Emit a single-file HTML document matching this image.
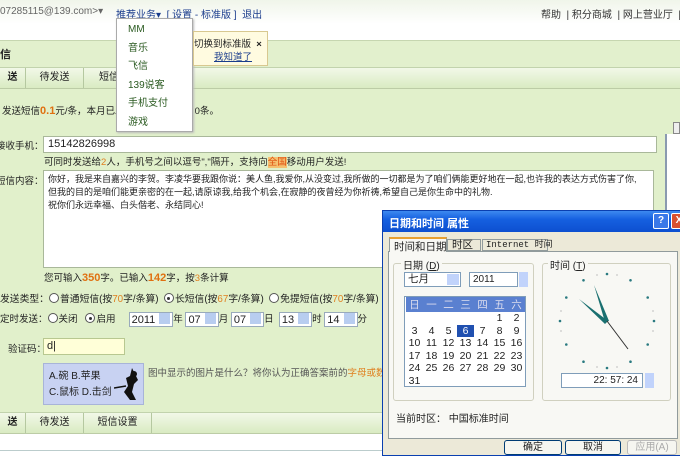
<!DOCTYPE html>
<html><head><meta charset="utf-8"><style>
*{margin:0;padding:0;box-sizing:border-box}
body{width:680px;height:456px;overflow:hidden;position:relative;font-family:"Liberation Sans","Noto Sans CJK SC",sans-serif;font-size:9.5px;color:#222;background:#fff}
.a{position:absolute;white-space:nowrap}
.o{color:#e07010;font-weight:bold;font-size:11px}
.og{color:#e08020}
.inp{position:absolute;background:#fff;border:1px solid #a9b89a}
.rad{display:inline-block;width:10px;height:10px;border:1px solid #555;border-radius:50%;vertical-align:-1px;margin-right:1px;background:#fff;position:relative}
.rad.on:after{content:"";position:absolute;left:2.5px;top:2.5px;width:3px;height:3px;background:#333;border-radius:50%}
.sel{display:inline-block;border:1px solid #9ab;background:#fff;padding:0 2px;height:15px;line-height:13px;vertical-align:middle;font-size:11px}
.sel b{display:inline-block;width:11px;height:11px;background:#b8cdf0;margin-left:4px;vertical-align:-1px}
.tabrow{position:absolute;left:0;width:665px;height:22px;background:linear-gradient(#f2f8e8,#d9ebc2);border-top:1px solid #c2d3ad;border-bottom:1px solid #bccca6;font-size:10px}
.tab{position:absolute;top:0;height:20px;line-height:20px;text-align:center;border-right:1px solid #b5c8a0}
.dlg{position:absolute;left:382px;top:210px;width:298px;height:246px;background:#ece9d8;border:1px solid #0a3fb0;border-right:none;font-size:10px}
.grp{position:absolute;border:1px solid #d0d0bf;border-radius:3px}
.btn{position:absolute;top:229px;height:15px;border:1px solid #003c74;border-radius:3px;background:#f6f6f0;text-align:center;line-height:13px}
.cal td{width:17px;height:12.5px;text-align:center;font-family:"Liberation Sans","Noto Sans CJK SC",sans-serif;font-size:10.5px}
</style></head><body>
<div class="a" style="left:0;top:0;width:680px;height:40px;background:linear-gradient(#f0f5ea,#fff 60%)"></div>
<div class="a" style="left:0;top:6px;color:#666;font-size:10px">07285115@139.com&gt;▾</div>
<div class="a" style="left:116px;top:6px;color:#1a3c8c;font-size:10px">推荐业务▾ &nbsp;[ 设置 - 标准版 ] &nbsp;退出</div>
<div class="a" style="left:541px;top:6px;color:#333;font-size:10px">帮助 &nbsp;| 积分商城 &nbsp;| 网上营业厅 &nbsp;| 中</div>
<div class="a" style="left:0;top:40px;width:680px;height:28px;background:#e2f0cd;border-top:1px solid #c6d6b0"></div>
<div class="a" style="left:0;top:46px;font-size:11px;font-weight:bold">信</div>
<div class="tabrow" style="top:67px;width:680px"><div class="tab" style="left:0;width:26px;font-weight:bold">送</div><div class="tab" style="left:26px;width:58px">待发送</div><div class="tab" style="left:84px;width:100px">短信&nbsp;&nbsp;&nbsp;&nbsp;&nbsp;&nbsp;&nbsp;&nbsp;&nbsp;&nbsp;&nbsp;&nbsp;&nbsp;&nbsp;<u style="color:#1a3c8c">置</u></div></div>
<div class="a" style="left:0;top:89px;width:680px;height:324px;background:#e1f0cb"></div>
<div class="a" style="left:2px;top:103px">发送短信<span class="o">0.1</span>元/条，本月已发送&nbsp;&nbsp;&nbsp;&nbsp;&nbsp;&nbsp;&nbsp;&nbsp;&nbsp;&nbsp;&nbsp;&nbsp;&nbsp;&nbsp;&nbsp;&nbsp;&nbsp;&nbsp;&nbsp;&nbsp;&nbsp;&nbsp;&nbsp;0条。</div>
<div class="a" style="left:-4px;top:138px">接收手机：</div>
<div class="inp" style="left:43px;top:136px;width:614px;height:17px;padding-left:4px;line-height:15px;font-size:11px">15142826998</div>
<div class="a" style="left:44px;top:154px">可同时发送给<span class="og">2</span>人，手机号之间以逗号","隔开，支持向<span class="og" style="background:#f5c070;color:#e05010">全国</span>移动用户发送!</div>
<div class="a" style="left:-4px;top:173px">短信内容：</div>
<div class="inp" style="left:43px;top:170px;width:611px;height:98px;padding:2px 4px;font-size:9px;line-height:13px;white-space:nowrap;overflow:hidden">你好，我是来自嘉兴的李贺。李凌华要我跟你说：美人鱼,我爱你,从没变过,我所做的一切都是为了咱们俩能更好地在一起,也许我的表达方式伤害了你,<br>但我的目的是咱们能更亲密的在一起,请原谅我,给我个机会,在寂静的夜曾经为你祈祷,希望自己是你生命中的礼物.<br>祝你们永远幸福、白头偕老、永结同心!</div>
<div class="a" style="left:44px;top:270px">您可输入<span class="o">350</span>字。已输入<span class="o">142</span>字，按<span class="og">3</span>条计算</div>
<div class="a" style="left:0;top:291px;font-size:9.8px">发送类型：<span class="rad"></span>普通短信(按<span class="og">70</span>字/条算) &nbsp;<span class="rad on"></span>长短信(按<span class="og">67</span>字/条算) &nbsp;<span class="rad"></span>免提短信(按<span class="og">70</span>字/条算)</div>
<div class="a" style="left:0;top:311px">定时发送：<span class="rad"></span>关闭 &nbsp; <span class="rad on"></span>启用 &nbsp;&nbsp;&nbsp; <span class="sel">2011<b></b></span>年 <span class="sel">07<b></b></span>月 <span class="sel">07<b></b></span>日 &nbsp;<span class="sel">13<b></b></span>时 <span class="sel">14<b></b></span>分</div>
<div class="a" style="left:8px;top:341px">验证码：</div>
<div class="inp" style="left:43px;top:338px;width:82px;height:17px;background:#ffffd8;border-color:#b8c890;padding-left:3px;line-height:15px;font-size:11px">d|</div>
<div class="a" style="left:43px;top:363px;width:101px;height:42px;background:#c8d2f2;border:1px solid #a8b4d8;padding:5px 5px;line-height:16px;font-size:10px">A.碗 B.苹果<br>C.鼠标 D.击剑</div>
<svg class="a" style="left:114px;top:366px" width="28" height="36" viewBox="0 0 28 36"><path d="M18 2 L16 10 L12 12 L14 20 L10 26 L16 34 L22 34 L18 26 L20 18 L24 14 Z" fill="#111"/><circle cx="20" cy="8" r="3" fill="#111"/><path d="M0 22 L12 20" stroke="#111" stroke-width="1.5"/></svg>
<div class="a" style="left:148px;top:365px;color:#555">图中显示的图片是什么？将你认为正确答案前的<span class="og">字母或数字</span></div>
<div class="tabrow" style="top:412px"><div class="tab" style="left:0;width:26px;font-weight:bold">送</div><div class="tab" style="left:26px;width:58px">待发送</div><div class="tab" style="left:84px;width:68px">短信设置</div></div>
<div class="a" style="left:0;top:450px;width:680px;height:1px;background:#bcc"></div>
<div class="a" style="left:665px;top:134px;width:15px;height:322px;background:#fff;border-left:2px solid #8a9ab0"></div>
<div class="a" style="left:673px;top:122px;width:7px;height:12px;border:1px solid #888;background:#eee"></div>
<div class="a" style="left:116px;top:18px;width:77px;height:114px;background:#fff;border:1px solid #aaa;box-shadow:1px 1px 2px #bbb;color:#2a5a20;line-height:18.6px;padding:2px 0 0 11px;font-size:10px">MM<br>音乐<br>飞信<br>139说客<br>手机支付<br>游戏</div>
<div class="a" style="left:193px;top:31px;width:75px;height:35px;background:#fffbe0;border:1px solid #d8c890;padding:4px 0 0 0">切换到标准版 &nbsp;<b>×</b><br><u style="margin-left:20px;color:#1a3c8c;line-height:16px">我知道了</u></div>
<div class="dlg">
<div class="a" style="left:0;top:0;width:298px;height:21px;background:linear-gradient(#3d8af0,#1560e0 40%,#0d4fd0);color:#fff;font-weight:bold;padding:4px 6px;font-size:11px">日期和时间 属性</div>
<div class="a" style="left:270px;top:2px;width:16px;height:16px;background:#3a78e8;border:1px solid #fff;border-radius:2px;color:#fff;text-align:center;font-weight:bold;line-height:14px">?</div>
<div class="a" style="left:288px;top:2px;width:16px;height:16px;background:#d85030;border:1px solid #fff;border-radius:2px;color:#fff;text-align:center;font-weight:bold;line-height:14px">X</div>
<div class="a" style="left:5px;top:40px;width:290px;height:188px;border:1px solid #919b9c;background:#f8f8f4"></div>
<div class="a" style="left:6px;top:26px;width:58px;height:15px;background:#f8f8f4;border:1px solid #919b9c;border-bottom:none;border-top:2px solid #e8a030;font-size:10.5px;padding-left:4px">时间和日期</div>
<div class="a" style="left:64px;top:28px;width:34px;height:12px;border:1px solid #919b9c;font-size:10.5px;padding-left:4px;line-height:11px">时区</div>
<div class="a" style="left:99px;top:28px;width:66px;height:12px;border:1px solid #919b9c;font-size:9px;padding-left:3px;line-height:11px;font-family:'Liberation Mono','Noto Sans CJK SC',monospace">Internet 时间</div>
<div class="grp" style="left:10px;top:52px;width:141px;height:138px"></div>
<div class="a" style="left:18px;top:46px;background:#f8f8f4;padding:0 2px">日期 (<u>D</u>)</div>
<div class="a" style="left:21px;top:61px;width:57px;height:15px;background:#fff;border:1px solid #7f9db9;padding-left:3px;line-height:13px;font-size:10.5px">七月<span style="position:absolute;right:1px;top:1px;width:12px;height:11px;background:#c1d3fb"></span></div>
<div class="a" style="left:86px;top:61px;width:49px;height:15px;background:#fff;border:1px solid #7f9db9;padding-left:3px;line-height:13px">2011</div>
<div class="a" style="left:136px;top:61px;width:9px;height:15px;background:#c1d3fb"></div>
<div class="a" style="left:21px;top:85px;width:122px;height:91px;background:#fff;border:1px solid #7f9db9">
<table class="cal" style="border-collapse:collapse;margin-left:1px"><tr style="background:#5a80d0;color:#dde"><td>日</td><td>一</td><td>二</td><td>三</td><td>四</td><td>五</td><td>六</td></tr>
<tr><td></td><td></td><td></td><td></td><td></td><td>1</td><td>2</td></tr>
<tr><td>3</td><td>4</td><td>5</td><td style="background:#2050b0;color:#fff">6</td><td>7</td><td>8</td><td>9</td></tr>
<tr><td>10</td><td>11</td><td>12</td><td>13</td><td>14</td><td>15</td><td>16</td></tr>
<tr><td>17</td><td>18</td><td>19</td><td>20</td><td>21</td><td>22</td><td>23</td></tr>
<tr><td>24</td><td>25</td><td>26</td><td>27</td><td>28</td><td>29</td><td>30</td></tr>
<tr><td>31</td><td></td><td></td><td></td><td></td><td></td><td></td></tr></table></div>
<div class="grp" style="left:159px;top:52px;width:129px;height:138px"></div>
<div class="a" style="left:165px;top:46px;background:#f8f8f4;padding:0 2px">时间 (<u>T</u>)</div>
<svg class="a" style="left:174px;top:60px" width="100" height="100" viewBox="0 0 100 100">
<g fill="#2a7a80">
<circle cx="50" cy="3" r="1.3"/><circle cx="97" cy="50" r="1.3"/><circle cx="50" cy="97" r="1.3"/><circle cx="3" cy="50" r="1.3"/>
<circle cx="73.5" cy="9.3" r="1.3"/><circle cx="90.7" cy="26.5" r="1.3"/><circle cx="90.7" cy="73.5" r="1.3"/><circle cx="73.5" cy="90.7" r="1.3"/>
<circle cx="26.5" cy="90.7" r="1.3"/><circle cx="9.3" cy="73.5" r="1.3"/><circle cx="9.3" cy="26.5" r="1.3"/><circle cx="26.5" cy="9.3" r="1.3"/></g>
<g fill="#999"><circle cx="60" cy="4" r=".6"/><circle cx="40" cy="4" r=".6"/><circle cx="96" cy="40" r=".6"/><circle cx="96" cy="60" r=".6"/><circle cx="4" cy="40" r=".6"/><circle cx="4" cy="60" r=".6"/><circle cx="40" cy="96" r=".6"/><circle cx="60" cy="96" r=".6"/></g>
<polygon points="37,14 52,50 48,51" fill="#1a7070"/>
<polygon points="22,28 51,50 48,53" fill="#1a7070"/>
<line x1="50" y1="50" x2="71" y2="78" stroke="#333" stroke-width="1"/>
</svg>
<div class="a" style="left:178px;top:162px;width:82px;height:15px;background:#fff;border:1px solid #7f9db9;text-align:right;padding-right:4px;line-height:13px">22: 57: 24</div>
<div class="a" style="left:262px;top:162px;width:9px;height:15px;background:#c1d3fb"></div>
<div class="a" style="left:13px;top:199px">当前时区： 中国标准时间</div>
<div class="btn" style="left:121px;width:58px">确定</div>
<div class="btn" style="left:182px;width:56px">取消</div>
<div class="btn" style="left:244px;width:50px;color:#aaa;border-color:#bbb">应用(A)</div>
</div>
</body></html>
